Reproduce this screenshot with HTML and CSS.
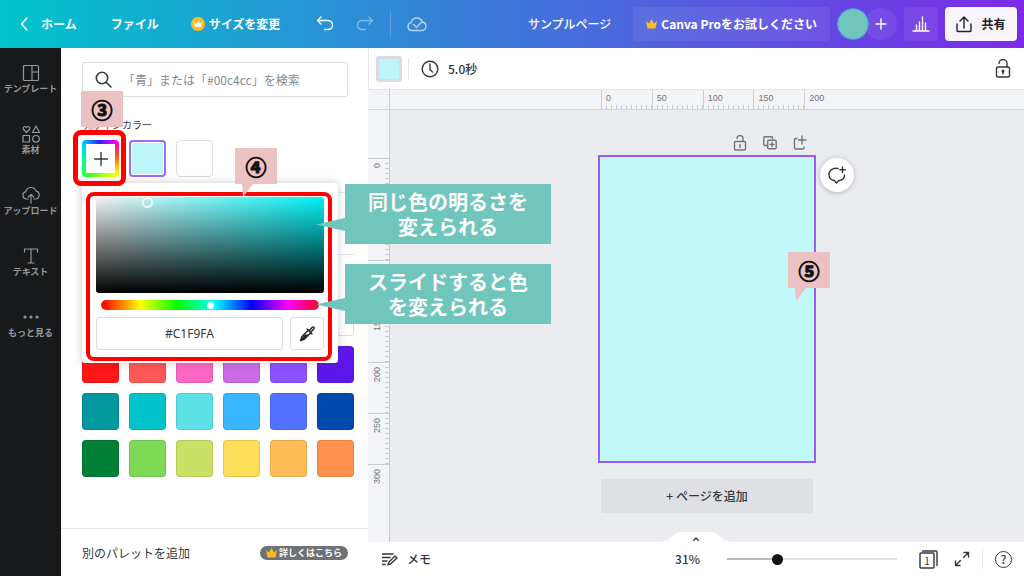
FILE: index.html
```html
<!DOCTYPE html>
<html lang="ja">
<head>
<meta charset="utf-8">
<meta name="viewport" content="width=device-width, initial-scale=1">
<title>サンプルページ</title>
<link rel="stylesheet" href="styles.css">
</head>
<body>
<div class="app">
  <header class="topbar">
    <nav class="topbar-menu">
      <a class="home" href="#"><svg width="8" height="14" viewBox="0 0 8 14"><path d="M7 1 1.500 7 7 13"/></svg>ホーム</a>
      <button class="menu-button" type="button">ファイル</button>
      <button class="resize" type="button"><svg width="14" height="14" viewBox="0 0 14 14"><circle class="coin" cx="7" cy="7" r="7"/><path class="coin-crown" d="M3 4.500 5 7l2-3.500L9 7l2-2.500-.8 5.500H3.800z"/></svg>サイズを変更</button>
    </nav>
    <div class="history">
      <button type="button" aria-label="元に戻す"><svg width="18" height="16" viewBox="0 0 18 16"><path d="M5 1 1.500 4.500 5 8M1.500 4.500H12a4.500 4.500 0 0 1 0 9H8.500"/></svg></button>
      <button class="faded" type="button" aria-label="やり直す"><svg width="18" height="16" viewBox="0 0 18 16"><path d="M13 1l3.500 3.500L13 8M16.500 4.500H6a4.500 4.500 0 0 0 0 9h3.500"/></svg></button>
      <span class="rule"></span>
      <svg class="cloud" width="20" height="16" viewBox="0 0 20 16"><path d="M5 14.500a4 4 0 0 1-.8-7.900 5.800 5.800 0 0 1 11.200-.6A4.300 4.300 0 0 1 15 14.500zM6.500 8.500l3 3 5.500-6"/></svg>
    </div>
    <div class="topbar-end">
      <span class="doc-title">サンプルページ</span>
      <button class="pro" type="button"><svg width="11" height="10" viewBox="0 0 11 10"><path class="gold" d="M0 2 3 4.500 5.500 0 8 4.500 11 2 9.500 9.500h-8z"/></svg>Canva Proをお試しください</button>
      <div class="members"><span class="avatar"></span><button class="invite" type="button" aria-label="メンバーを追加"><svg width="12" height="12" viewBox="0 0 12 12"><path d="M6 1v10M1 6h10"/></svg></button></div>
      <button class="stats" type="button" aria-label="インサイト"><svg width="18" height="16" viewBox="0 0 18 16"><path d="M1 15h16M4.500 15V9M7.500 15V6M10.500 15V1M13.500 15V7"/></svg></button>
      <button class="share" type="button"><svg width="16" height="17" viewBox="0 0 16 17"><path d="M8 12V1.500M4 5l4-4 4 4M1 8v6.500A1 1 0 0 0 2 15.500h12a1 1 0 0 0 1-1V8"/></svg>共有</button>
    </div>
  </header>

  <div class="body">
    <nav class="rail">
      <a href="#"><svg width="18" height="18" viewBox="0 0 18 18"><rect x="1.500" y="1.500" width="15" height="15" rx="1"/><path d="M10 1.500v15M10 8h6.500"/></svg>テンプレート</a>
      <a href="#"><svg width="18" height="18" viewBox="0 0 18 18"><path d="M4.500 7.500 1.600 4.500C0 2.500 3 .2 4.500 2.500 6 .2 9 2.500 7.400 4.500zM14 1l3.500 6.500h-7zM1 10.500h6.500V17H1z"/><circle cx="14" cy="13.800" r="3.300"/></svg>素材</a>
      <a href="#"><svg width="18" height="18" viewBox="0 0 18 18"><path d="M6 13H4.500a3.700 3.700 0 0 1-.7-7.300 5.300 5.300 0 0 1 10.200-.6A4 4 0 0 1 13.500 13H12M9 17V8.500M6.300 11 9 8.300l2.700 2.700"/></svg>アップロード</a>
      <a href="#"><svg width="18" height="18" viewBox="0 0 18 18"><path d="M2.500 5V2h13v3M9 2v14M6 16h6"/></svg>テキスト</a>
      <a href="#"><svg width="18" height="18" viewBox="0 0 18 18"><g class="dots"><circle cx="3" cy="9" r="1.600"/><circle cx="9" cy="9" r="1.600"/><circle cx="15" cy="9" r="1.600"/></g></svg>もっと見る</a>
    </nav>

    <aside class="panel">
      <div class="panel-scroll">
        <label class="search"><svg width="17" height="17" viewBox="0 0 17 17"><circle cx="7" cy="7" r="5.700"/><path d="m11.200 11.200 4.800 4.800"/></svg><input type="search" aria-label="カラーを検索" placeholder="「青」または「#00c4cc」を検索"></label>
        <h2 class="section-title">デザインカラー</h2>
        <div class="swatches">
          <div class="add-slot">
            <button class="add-color" type="button" aria-label="カラーを追加"><svg width="14" height="14" viewBox="0 0 14 14"><path d="M7 .5v13M.5 7h13"/></svg></button>
            <div class="tag tag-three">③</div>
            <div class="frame frame-add"></div>
          </div>
          <button class="swatch selected" type="button" aria-label="#C1F9FA"></button>
          <button class="swatch white" type="button" aria-label="白"></button>

          <div class="picker">
            <div class="shade"><span class="shade-handle"></span></div>
            <input class="hue" type="range" min="0" max="100" value="50" aria-label="色相">
            <div class="hex-row">
              <input class="hex" type="text" value="#C1F9FA" aria-label="カラーコード">
              <button class="dropper" type="button" aria-label="スポイト"><svg width="17" height="17" viewBox="0 0 17 17"><path d="M9.500 5 3 11.500 1.500 15.500 5.500 14 12 7.500M8 4l5 5M10.500 5.500 13 2.500c1.500-1.500 3 .2 1.800 1.500L12 7"/><path class="ink" d="M4 11.500 6 9.500h3.500L5 14l-3 1z"/></svg></button>
            </div>
            <div class="frame frame-picker"></div>
            <div class="tag tag-four">④</div>
            <div class="note note-shade">同じ色の明るさを<br>変えられる</div>
            <div class="note note-hue">スライドすると色<br>を変えられる</div>
          </div>
        </div>
        <hr class="split split-short">
        <hr class="split">
        <div class="palette">
          <button class="swatch black" type="button" aria-label="黒"></button><button class="swatch gray1" type="button" aria-label="濃い灰"></button><button class="swatch gray2" type="button" aria-label="灰"></button><button class="swatch gray3" type="button" aria-label="薄い灰"></button><button class="swatch gray4" type="button" aria-label="淡い灰"></button><button class="swatch white" type="button" aria-label="白"></button>
          <button class="swatch red" type="button" aria-label="赤"></button><button class="swatch coral" type="button" aria-label="コーラル"></button><button class="swatch pink" type="button" aria-label="ピンク"></button><button class="swatch orchid" type="button" aria-label="オーキッド"></button><button class="swatch purple" type="button" aria-label="紫"></button><button class="swatch violet" type="button" aria-label="青紫"></button>
          <button class="swatch teal" type="button" aria-label="青緑"></button><button class="swatch aqua" type="button" aria-label="アクア"></button><button class="swatch sky" type="button" aria-label="水色"></button><button class="swatch azure" type="button" aria-label="空色"></button><button class="swatch blue" type="button" aria-label="青"></button><button class="swatch navy" type="button" aria-label="紺"></button>
          <button class="swatch green" type="button" aria-label="緑"></button><button class="swatch grass" type="button" aria-label="黄緑"></button><button class="swatch lime" type="button" aria-label="ライム"></button><button class="swatch yellow" type="button" aria-label="黄"></button><button class="swatch peach" type="button" aria-label="ピーチ"></button><button class="swatch orange" type="button" aria-label="オレンジ"></button>
        </div>
      </div>
      <footer class="panel-footer">
        <span>別のパレットを追加</span>
        <a class="learn" href="#"><svg width="11" height="10" viewBox="0 0 11 10"><path class="gold" d="M0 2 3 4.500 5.500 0 8 4.500 11 2 9.500 9.500h-8z"/></svg>詳しくはこちら</a>
      </footer>
    </aside>

    <main class="editor">
      <div class="toolbar">
        <button class="current-color" type="button" aria-label="背景色"></button>
        <span class="rule"></span>
        <button class="timing" type="button"><svg width="18" height="18" viewBox="0 0 18 18"><circle cx="9" cy="9" r="7.800"/><path d="M9 4v5.500l2.500 2.500"/></svg>5.0秒</button>
        <button class="lock" type="button" aria-label="ロック"><svg width="16" height="19" viewBox="0 0 16 19"><rect x="1.500" y="8" width="13" height="10" rx="1.500"/><path d="M4 4.500a4 4 0 0 1 8 0V8M8 12v3"/><circle class="ink" cx="8" cy="12" r="1.500"/></svg></button>
      </div>
      <div class="workspace">
        <div class="corner"></div>
        <div class="ruler-x"><div class="scale-x"><span>0</span><span>50</span><span>100</span><span>150</span><span class="last">200</span></div></div>
        <div class="ruler-y"><span>0</span><span>50</span><span>100</span><span>150</span><span>200</span><span>250</span><span class="last">300</span></div>
        <div class="stage">
          <div class="sheet">
            <div class="sheet-tools">
              <button type="button" aria-label="ページをロック"><svg width="14" height="16" viewBox="0 0 14 16"><rect x="1.500" y="6.500" width="11" height="8.500" rx="1"/><path d="M4 3.500a3 3 0 0 1 6 0v3M7 9.500v3"/></svg></button>
              <button type="button" aria-label="ページを複製"><svg width="14" height="14" viewBox="0 0 14 14"><path d="M3.500 9.500H1.800a1 1 0 0 1-1-1V1.800a1 1 0 0 1 1-1h6.700a1 1 0 0 1 1 1v1M9 6.500v4M7 8.500h4"/><rect x="4.700" y="4.200" width="8.500" height="8.500" rx="1"/></svg></button>
              <button type="button" aria-label="ページを追加"><svg width="14" height="16" viewBox="0 0 14 16"><path d="M4 3.500H2.500a1 1 0 0 0-1 1v8.500a1 1 0 0 0 1 1H10a1 1 0 0 0 1-1v-1M9 1v8M5.500 5H13"/></svg></button>
            </div>
            <div class="artboard">
              <button class="comment" type="button" aria-label="コメント"><svg width="20" height="20" viewBox="0 0 20 20"><path d="M11 3.500C5 2.500 2 6 2 9.500c0 3.500 2.500 5.700 5.500 6.200L9.500 18l2-2.300c3.500-.4 6-2.700 6-5.700M15.500 2v5.500M12.800 4.700h5.400"/></svg></button>
              <div class="tag tag-five">⑤</div>
            </div>
            <button class="add-page" type="button">+ ページを追加</button>
          </div>
        </div>
      </div>
      <footer class="statusbar">
        <button class="memo" type="button"><svg width="16" height="14" viewBox="0 0 16 14"><path d="M0 2h11M0 5.500h8M0 9h5M0 12.500h3M7 10l6-6 2 2-6.500 6-2.500.7z"/></svg>メモ</button>
        <button class="pages-tab" type="button" aria-label="ページ一覧"><svg width="6" height="4" viewBox="0 0 6 4"><path d="m.5 3.500 2.500-2.500 2.500 2.500"/></svg></button>
        <div class="status-end">
          <label class="zoom-value" for="zoom">31%</label>
          <input class="zoom" id="zoom" type="range" min="0" max="100" value="28">
          <button class="page-count" type="button" aria-label="ページ 1"><svg width="19" height="19" viewBox="0 0 19 19"><rect x="1" y="3" width="14" height="15" rx="1"/><path d="M3.500 1H17a1 1 0 0 1 1 1v13.500"/></svg><span>1</span></button>
          <button type="button" aria-label="全画面表示"><svg width="16" height="16" viewBox="0 0 16 16"><path d="M9.500 6.500 14 2M10 1.500h4.500V6M6.500 9.500 2 14M1.500 10v4.500H6"/></svg></button>
          <span class="rule"></span>
          <button class="help" type="button" aria-label="ヘルプ">?</button>
        </div>
      </footer>
    </main>
  </div>
</div>
</body>
</html>
```
FILE: styles.css
```css
* { box-sizing: border-box; }

body {
  margin: 0;
  font-family: "Noto Sans CJK JP", sans-serif;
  font-size: 12px;
  line-height: 16px;
  color: #33373d;
}

button, input { font: inherit; color: inherit; }
button { display: flex; align-items: center; padding: 0; border: 0; background: none; cursor: pointer; }
a { color: inherit; text-decoration: none; }
svg { display: block; flex: none; fill: none; stroke: currentColor; stroke-width: 1.4; stroke-linecap: round; stroke-linejoin: round; }
.gold { fill: #fdbc22; stroke: none; }
.ink { fill: currentColor; stroke: none; }
.rule { width: 1px; background: #e4e6ea; }

.app { display: flex; flex-direction: column; height: 100vh; overflow: hidden; }

/* Top bar */
.topbar {
  display: flex;
  align-items: center;
  flex: none;
  height: 48px;
  padding: 0 7px 0 20px;
  color: #fff;
  font-weight: 700;
  background: linear-gradient(90deg, #00c4cc, #7d2ae8);
}
.topbar-menu { display: flex; align-items: center; gap: 34px; }
.home { display: flex; align-items: center; gap: 13px; }
.resize { gap: 4px; margin-left: -2px; }
.coin { fill: #fdbc22; stroke: none; }
.coin-crown { fill: #fff; stroke: none; }
.history { display: flex; align-items: center; gap: 16px; margin-left: 36px; }
.history .rule { height: 26px; background: rgba(255, 255, 255, .2); }
.history button { margin-right: 6px; }
.history .faded { margin-right: 0; opacity: .4; }
.cloud { opacity: .65; }
.topbar-end { display: flex; align-items: center; gap: 7px; margin-left: auto; }
.doc-title { margin-right: 15px; font-weight: 500; }
.pro { gap: 4px; height: 34px; padding: 0 13px; border-radius: 4px; background: rgba(255, 255, 255, .07); }
.members { display: flex; }
.avatar { z-index: 1; width: 32px; height: 32px; border-radius: 50%; background: #70c5bd; border: 1px solid #4c8fe8; }
.invite { justify-content: center; width: 32px; height: 32px; margin-left: -4px; border-radius: 50%; background: rgba(255, 255, 255, .07); }
.stats { justify-content: center; width: 34px; height: 34px; border-radius: 4px; background: rgba(255, 255, 255, .07); }
.share { justify-content: center; gap: 9px; width: 72px; height: 34px; border-radius: 4px; background: #f8f4fe; color: #1e2126; }

.body { display: flex; flex: 1; min-height: 0; }

/* Side rail */
.rail { flex: none; width: 61px; padding-top: 16px; background: #18191b; color: #96989b; font-size: 9px; font-weight: 700; line-height: 12px; }
.rail a { display: flex; flex-direction: column; align-items: center; gap: 1px; height: 61px; white-space: nowrap; }
.rail svg { stroke-width: 1.2; }
.dots { fill: currentColor; stroke: none; }

/* Colour panel */
.panel { display: flex; flex-direction: column; flex: none; width: 307px; background: #fff; }
.panel-scroll { flex: 1; min-height: 0; padding: 14px 13px 0 21px; }
.search { display: flex; align-items: center; gap: 11px; height: 35px; margin-right: 7px; padding: 0 10px 0 12px; border: 1px solid #d9dce1; border-radius: 3px; }
.search svg { stroke-width: 1.6; }
.search input { flex: 1; min-width: 0; padding: 0; border: 0; outline: 0; font-size: 12px; background: none; }
.search input::placeholder { color: #858a91; }
.section-title { margin: 20px 0 7px; font-size: 10px; font-weight: 400; line-height: 16px; }
.swatches { position: relative; display: flex; gap: 10px; }
.swatch, .add-color { width: 37px; height: 37px; border-radius: 4px; border: 1px solid rgba(0, 0, 0, .1); }
.add-slot { position: relative; z-index: 3; }
.add-color {
  justify-content: center;
  border: 4px solid transparent;
  background: linear-gradient(#fff, #fff) padding-box,
    conic-gradient(from 45deg, #f0a, #f60 12%, #ff0 25%, #3f3 48%, #0f9 62%, #0cf 74%, #22f 86%, #f0f) border-box;
}
.selected { border: 2px solid #a06af5; background: #bdf6fa; box-shadow: inset 0 0 0 1px #fff; }
.white { border-color: #d9dce1; background: #fff; }

.picker {
  position: absolute;
  z-index: 2;
  top: 43px;
  left: 0;
  width: 256px;
  padding: 14px 14px 13px;
  border-radius: 3px;
  background: #fff;
  box-shadow: 0 0 8px rgba(40, 50, 70, .25);
}
.shade { position: relative; height: 96px; border-radius: 3px; background: linear-gradient(transparent, #000), linear-gradient(90deg, #f4f4f4, #00f2f6); }
.shade-handle { position: absolute; top: 0; left: 46px; width: 11px; height: 11px; border: 2px solid #e6fbfc; border-radius: 50%; }
.hue {
  display: block;
  appearance: none;
  width: calc(100% - 10px);
  height: 10px;
  margin: 7px 5px;
  border-radius: 5px;
  background: linear-gradient(90deg, #f10 2%, #ff0 18%, #0f0 35%, #0ff 52%, #00f 69%, #f0f 86%, #f04 98%);
}
.hue::-webkit-slider-thumb { appearance: none; width: 7px; height: 7px; border-radius: 50%; background: #fff; }
.hex-row { display: flex; gap: 7px; }
.hex { flex: 1; min-width: 0; height: 33px; padding: 0; border: 1px solid #d9dce1; border-radius: 3px; font-family: "Noto Sans", sans-serif; text-align: center; }
.dropper { justify-content: center; width: 34px; height: 33px; border: 1px solid #d9dce1; border-radius: 3px; color: #1e2126; }

.split { width: 100%; margin: 15px 0 0; border: 0; border-top: 1px solid #e4e6ea; }
.split + .split { margin-top: 61px; }
.palette { display: grid; grid-template-columns: repeat(6, 37px); gap: 10px; margin-top: 44px; }
.black { background: #000; }
.gray1 { background: #545454; }
.gray2 { background: #737373; }
.gray3 { background: #a6a6a6; }
.gray4 { background: #d9d9d9; }
.red { background: #ff1616; }
.coral { background: #ff5757; }
.pink { background: #ff66c4; }
.orchid { background: #cb6ce6; }
.purple { background: #8c52ff; }
.violet { background: #5e17eb; }
.teal { background: #03989e; }
.aqua { background: #00c2cb; }
.sky { background: #5ce1e6; }
.azure { background: #38b6ff; }
.blue { background: #5271ff; }
.navy { background: #004aad; }
.green { background: #008037; }
.grass { background: #7ed957; }
.lime { background: #c9e265; }
.yellow { background: #ffde59; }
.peach { background: #ffbd59; }
.orange { background: #ff914d; }

.panel-footer { display: flex; align-items: center; justify-content: space-between; height: 48px; padding: 0 20px 0 21px; border-top: 1px solid #e4e6ea; }
.learn { display: flex; align-items: center; gap: 2px; height: 14px; padding: 0 6px; border-radius: 7px; background: #6e7276; color: #fff; font-size: 9px; font-weight: 700; line-height: 14px; }

/* Step markers and notes */
.frame { position: absolute; z-index: 1; border: 5px solid #fe0000; border-radius: 8px; pointer-events: none; }
.frame-add { inset: -10px -7px -9px -9px; }
.frame-picker { inset: 9px 6px 2px 4px; border-width: 4px; }
.tag { position: absolute; z-index: 2; width: 42px; height: 36px; background: #ecc1c1; color: #111; font-size: 21px; font-weight: 700; line-height: 36px; text-align: center; -webkit-text-stroke: 1px #111; }
.tag::after { content: ""; position: absolute; top: 100%; left: 7px; width: 11px; height: 13px; background: inherit; clip-path: polygon(0 0, 100% 0, 10% 100%); }
.tag-three { top: -49px; left: -1px; z-index: 0; }
.tag-three::after { height: 4px; }
.tag-four { top: -35px; left: 153px; }
.tag-five { top: 95px; right: -16px; }
.note { position: absolute; z-index: 3; left: 263px; width: 206px; padding: 5px 0; background: #70c5bd; color: #fff; font-size: 20px; font-weight: 700; line-height: 25px; text-align: center; white-space: nowrap; }
.note::before { content: ""; position: absolute; right: 100%; top: 34px; width: 29px; height: 13px; background: inherit; clip-path: polygon(0 50%, 100% 0, 100% 100%); }
.note-shade { top: 1px; }
.note-hue { top: 81px; }

/* Editor */
.editor { display: flex; flex: 1; flex-direction: column; min-width: 0; }
.toolbar { display: flex; align-items: center; flex: none; height: 41px; padding: 0 13px 0 7px; border-left: 1px solid #e4e6ea; background: #fff; }
.toolbar .rule { height: 22px; margin: 0 12px 0 6px; }
.current-color { width: 26px; height: 26px; border: 3px solid #d9dce1; border-radius: 3px; background: #bdf6fa; }
.timing { gap: 9px; font-weight: 500; }
.lock { margin-left: auto; }
.workspace { display: grid; grid-template: 21px minmax(0, 1fr) / 22px minmax(0, 1fr); flex: 1; min-height: 0; background: #ebecf0; }
.corner, .ruler-x, .ruler-y { background: #f3f4f7; color: #70747a; font-family: "Liberation Sans", sans-serif; font-size: 9px; line-height: 10px; }
.corner, .ruler-y { border-right: 1px solid #c9ccd1; }
.corner, .ruler-x { border-bottom: 1px solid #d4d6db; border-top: 1px solid #e4e6ea; }
.scale-x { display: flex; width: 212px; height: 100%; margin: 0 auto; }
.scale-x span { flex: 50 0 0; min-width: 0; padding: 3px 0 0 4px; border-left: 1px solid #c9ccd1; background: repeating-linear-gradient(90deg, transparent 0 4px, #c9ccd1 4px 5px) bottom / 100% 4px no-repeat; }
.scale-x .last { flex-grow: 4; background: none; }
.ruler-y { padding-top: 48px; overflow: hidden; }
.ruler-y span { display: block; width: 100%; height: 51px; padding: 0 0 4px; writing-mode: vertical-rl; transform: rotate(180deg); text-align: right; border-bottom: 1px solid #c9ccd1; background: repeating-linear-gradient(0deg, transparent 0 4px, #c9ccd1 4px 5px) left / 4px 100% no-repeat; line-height: 18px; }
/* The labels are turned by 180deg, so the line that opens a segment is its bottom border. */
.ruler-y .last { background: none; }
.stage { display: flex; justify-content: center; padding-top: 25px; overflow: hidden; }
.sheet { display: flex; flex-direction: column; width: 218px; }
.sheet-tools { display: flex; justify-content: flex-end; gap: 16px; height: 16px; margin-bottom: 4px; padding-right: 9px; color: #70747a; }
.artboard { position: relative; height: 308px; border: 2px solid #9b5cf6; background: #c1f9fa; }
.comment { position: absolute; top: 1px; right: -40px; justify-content: center; width: 34px; height: 34px; border-radius: 50%; background: #fff; box-shadow: 0 1px 5px rgba(40, 50, 80, .3); }
.add-page { justify-content: center; height: 34px; margin: 16px 3px 0; border-radius: 3px; background: #dee0e4; font-size: 12px; font-weight: 500; }

.statusbar { position: relative; display: flex; align-items: center; justify-content: space-between; flex: none; height: 34px; padding: 0 12px 0 14px; background: #fff; }
.memo { gap: 9px; font-weight: 500; }
.pages-tab { position: absolute; bottom: 100%; left: 50%; justify-content: center; width: 70px; height: 10px; margin-left: -35px; padding-top: 4px; background: #fff; clip-path: polygon(0 100%, 9% 85%, 20% 15%, 28% 0, 72% 0, 80% 15%, 91% 85%, 100% 100%); }
.status-end { display: flex; align-items: center; }
.status-end .rule { height: 20px; margin: 0 12px; }
.zoom-value { margin-right: 27px; font-weight: 500; }
.zoom { appearance: none; width: 170px; height: 12px; margin: 0 22px 0 0; background: linear-gradient(90deg, #b4b7bc 29%, #dfe2e7 29%) center / 100% 2px no-repeat; }
.zoom::-webkit-slider-thumb { appearance: none; width: 11px; height: 11px; border-radius: 50%; background: #0e1318; }
.page-count { display: grid; margin-right: 16px; font-size: 10px; line-height: 14px; }
.page-count svg, .page-count span { grid-area: 1 / 1; }
.page-count span { padding: 3px 3px 0 0; }
.help { justify-content: center; width: 17px; height: 17px; border: 1px solid #33373d; border-radius: 50%; font-weight: 500; }
```
